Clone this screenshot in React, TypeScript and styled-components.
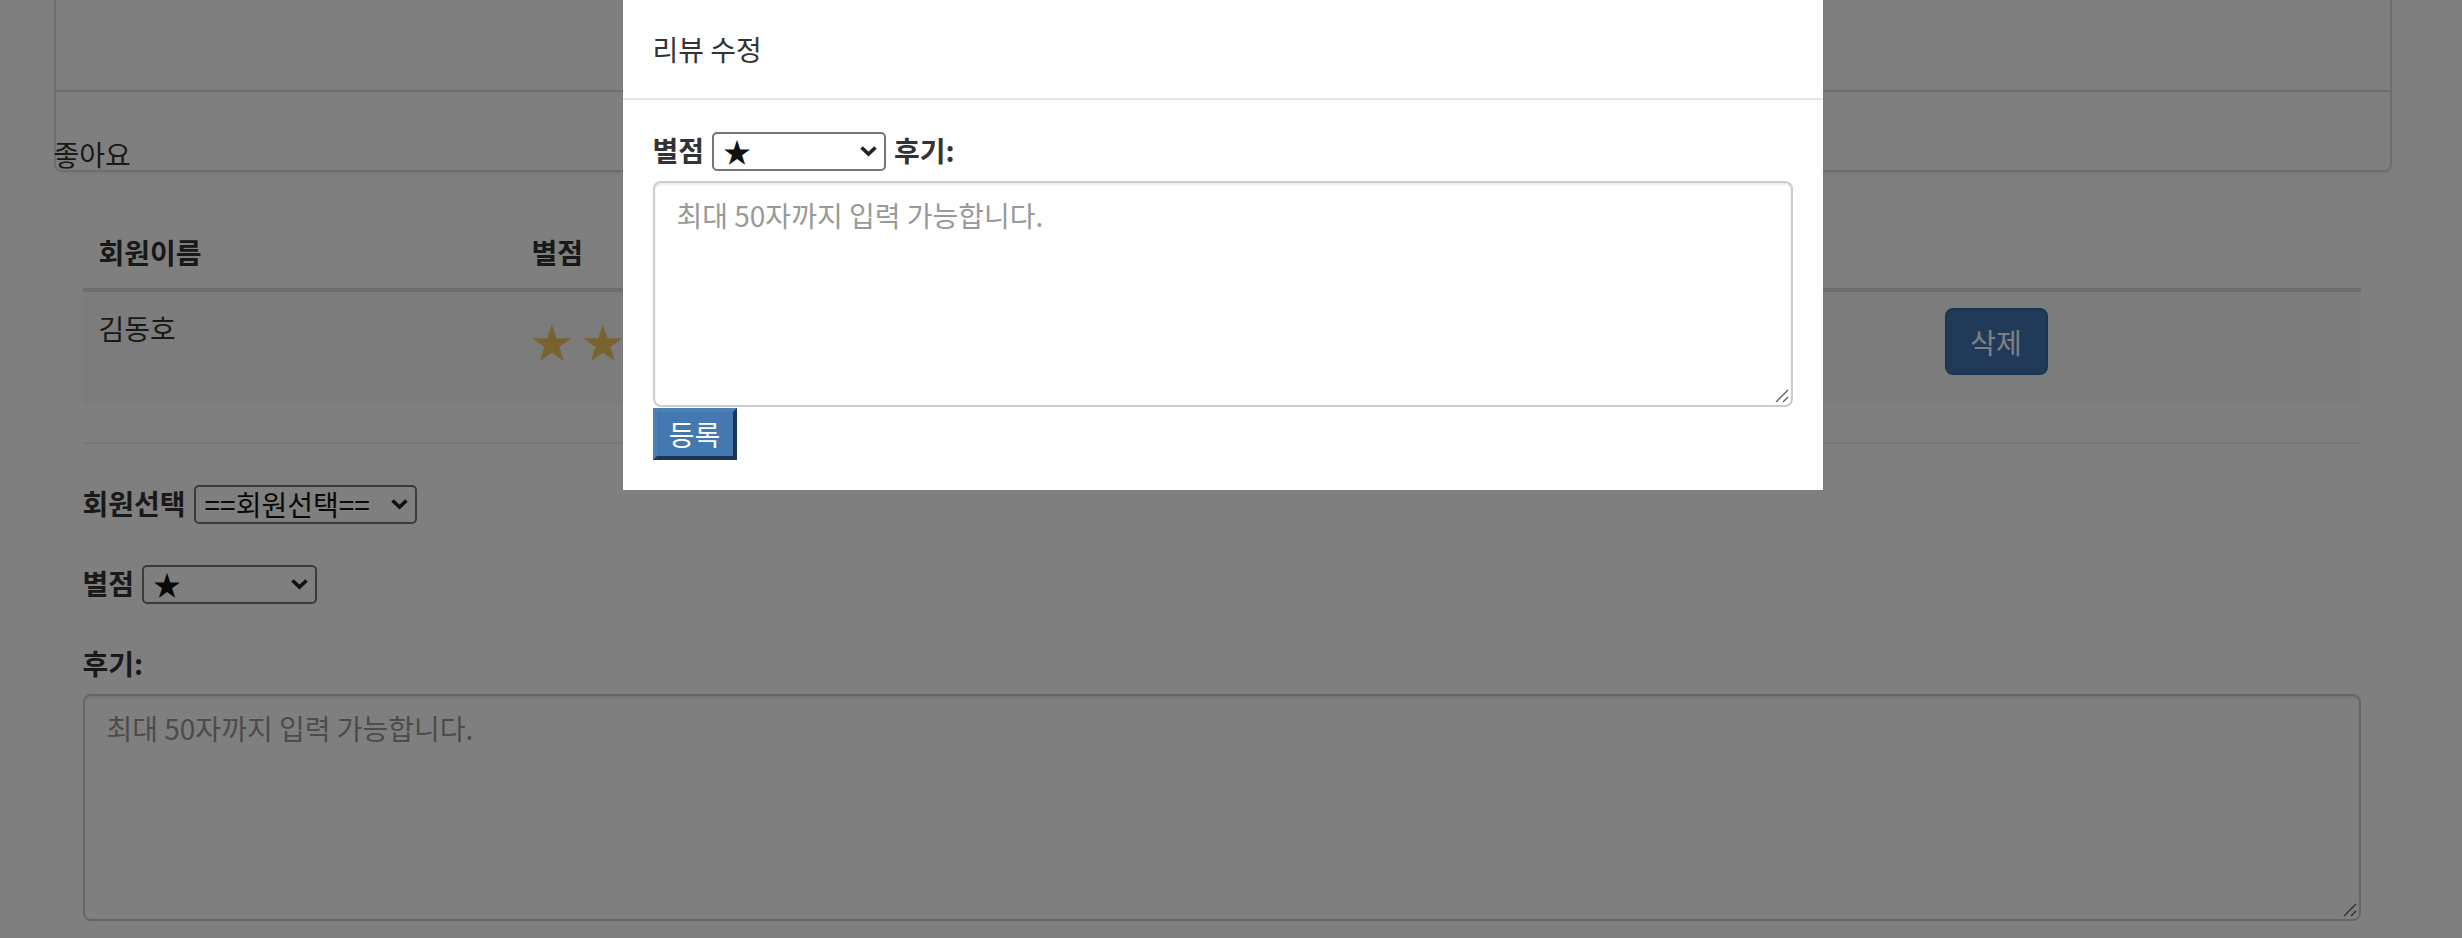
import React from 'react'
import styled, { createGlobalStyle } from 'styled-components'

const GlobalStyle = createGlobalStyle`
  * { box-sizing: border-box; }
  html, body { margin: 0; padding: 0; }
  body {
    height: 938px;
    overflow: hidden;
    padding-right: 17px;
    background: #fff;
    color: #333;
    font-family: 'Noto Sans CJK KR', 'Noto Sans', sans-serif;
    font-size: 28px;
    line-height: 40px;
  }
`

const Page = styled.div`
  width: 2338px;
  margin: 0 auto;
`

const ReviewPanel = styled.div`
  border: 2px solid #dcdcdc;
  border-top: 0;
  border-radius: 0 0 8px 8px;
  box-shadow: 0 2px 2px rgba(0, 0, 0, 0.05);
`

const PanelBody = styled.div`
  height: 92px;
  border-bottom: 2px solid #dcdcdc;
`

const PanelFooter = styled.div`
  padding-top: 42px;
`

const PanelText = styled.div`
  margin: 0 0 -4px -2px;
`

const Content = styled.div`
  padding: 44px 31px 0 29px;
`

const Table = styled.table`
  width: 100%;
  border-collapse: collapse;
  table-layout: fixed;
`

const Th = styled.th<{ $w: number }>`
  width: ${(p) => p.$w}px;
  padding: 16px;
  text-align: left;
  font-weight: 700;
  line-height: 40px;
  vertical-align: bottom;
  border-bottom: 4px solid #ddd;
`

const Row = styled.tr`
  height: 114px;
  background: #f9f9f9;
`

const Td = styled.td`
  padding: 16px;
  vertical-align: top;
  line-height: 40px;
`

const Stars = styled.div`
  line-height: 64px;
  font-size: 41px;
  letter-spacing: 10px;
  color: #f2c75a;
  white-space: nowrap;
`

const SolidButton = styled.button`
  width: 103px;
  height: 67px;
  padding: 0;
  border: 2px solid #2e6da4;
  border-radius: 8px;
  background: #4275b4;
  color: #fff;
  font: inherit;
  line-height: 40px;
`

const Divider = styled.hr`
  margin: 38px 0 0;
  border: 0;
  border-top: 2px solid #eee;
`

const FieldRow = styled.div<{ $top: number }>`
  display: flex;
  align-items: center;
  gap: 8px;
  height: 40px;
  margin-top: ${(p) => p.$top}px;
`

const Label = styled.span`
  font-weight: 700;
  white-space: nowrap;
`

const SelectBox = styled.div<{ $w: number }>`
  position: relative;
  width: ${(p) => p.$w}px;
  height: 39px;
  flex: none;
`

const Select = styled.select`
  appearance: none;
  width: 100%;
  height: 100%;
  margin: 0;
  padding: 0 0 0 9px;
  border: 2px solid #767676;
  border-radius: 5px;
  background: #fff;
  color: #111;
  font: inherit;
  line-height: 35px;
`

const Chevron = styled.svg`
  position: absolute;
  right: 8px;
  top: 14px;
  pointer-events: none;
`

const AreaBox = styled.div<{ $top: number }>`
  position: relative;
  margin-top: ${(p) => p.$top}px;
`

const TextArea = styled.textarea<{ $h: number }>`
  display: block;
  width: 100%;
  height: ${(p) => p.$h}px;
  margin: 0;
  padding: 12px 22px;
  border: 2px solid #ccc;
  border-radius: 8px;
  box-shadow: inset 0 2px 2px rgba(0, 0, 0, 0.075);
  background: #fff;
  color: #555;
  font: inherit;
  line-height: 40px;
  resize: none;
  &::placeholder {
    color: #999;
  }
`

const Grip = styled.svg`
  position: absolute;
  right: 3px;
  bottom: 3px;
  pointer-events: none;
`

const Backdrop = styled.div`
  position: fixed;
  inset: 0;
  background: rgba(0, 0, 0, 0.5);
`

const ModalLayer = styled.div`
  position: fixed;
  inset: 0;
  display: flex;
  justify-content: center;
  align-items: flex-start;
  padding-right: 17px;
`

const ModalDialog = styled.div`
  width: 1200px;
  background: #fff;
`

const ModalHeader = styled.div`
  padding: 29px 30px;
  border-bottom: 2px solid #e5e5e5;
`

const ModalBody = styled.div`
  padding: 30px;
`

const RegisterButton = styled.button`
  display: block;
  width: 84px;
  height: 52px;
  margin-top: 1px;
  padding: 0;
  border: 4px solid;
  border-color: #4c7fb7 #1d3553 #1d3553 #4c7fb7;
  background: #4378b0;
  color: #fff;
  font: inherit;
  line-height: 40px;
`

const ChevronIcon = () => (
  <Chevron width="19" height="12" viewBox="0 0 19 12">
    <polyline points="2.5,2.5 9.5,9 16.5,2.5" fill="none" stroke="#222" strokeWidth="3.6" />
  </Chevron>
)

const Dropdown: React.FC<{ width: number; options: string[] }> = ({ width, options }) => (
  <SelectBox $w={width}>
    <Select defaultValue={options[0]}>
      {options.map((o) => (
        <option key={o}>{o}</option>
      ))}
    </Select>
    <ChevronIcon />
  </SelectBox>
)

const ReviewArea: React.FC<{ top: number; height: number }> = ({ top, height }) => (
  <AreaBox $top={top}>
    <TextArea $h={height} placeholder="최대 50자까지 입력 가능합니다." />
    <Grip width="16" height="16" viewBox="0 0 16 16">
      <line x1="2" y1="14" x2="14" y2="2" stroke="#666" strokeWidth="1.4" />
      <line x1="9" y1="14" x2="14" y2="9" stroke="#666" strokeWidth="1.4" />
    </Grip>
  </AreaBox>
)

const ratingOptions = ['★', '★★', '★★★', '★★★★', '★★★★★']

const App: React.FC = () => {
  return (
    <>
      <GlobalStyle />
      <Page>
        <ReviewPanel>
          <PanelBody />
          <PanelFooter>
            <PanelText>좋아요</PanelText>
          </PanelFooter>
        </ReviewPanel>
        <Content>
          <Table>
            <thead>
              <tr>
                <Th $w={433}>회원이름</Th>
                <Th $w={480}>별점</Th>
                <Th $w={520}>후기</Th>
                <Th $w={413}></Th>
                <Th $w={432}></Th>
              </tr>
            </thead>
            <tbody>
              <Row>
                <Td>김동호</Td>
                <Td>
                  <Stars>★★★★★</Stars>
                </Td>
                <Td>좋아요</Td>
                <Td>
                  <SolidButton>수정</SolidButton>
                </Td>
                <Td>
                  <SolidButton>삭제</SolidButton>
                </Td>
              </Row>
            </tbody>
          </Table>
          <Divider />
          <FieldRow $top={39}>
            <Label>회원선택</Label>
            <Dropdown width={223} options={['==회원선택==', '김동호']} />
          </FieldRow>
          <FieldRow $top={40}>
            <Label>별점</Label>
            <Dropdown width={175} options={ratingOptions} />
          </FieldRow>
          <FieldRow $top={40}>
            <Label>후기:</Label>
          </FieldRow>
          <ReviewArea top={11} height={227} />
        </Content>
      </Page>
      <Backdrop />
      <ModalLayer>
        <ModalDialog>
          <ModalHeader>리뷰 수정</ModalHeader>
          <ModalBody>
            <FieldRow $top={0}>
              <Label>별점</Label>
              <Dropdown width={174} options={ratingOptions} />
              <Label>후기:</Label>
            </FieldRow>
            <ReviewArea top={11} height={226} />
            <RegisterButton>등록</RegisterButton>
          </ModalBody>
        </ModalDialog>
      </ModalLayer>
    </>
  )
}

export default App
